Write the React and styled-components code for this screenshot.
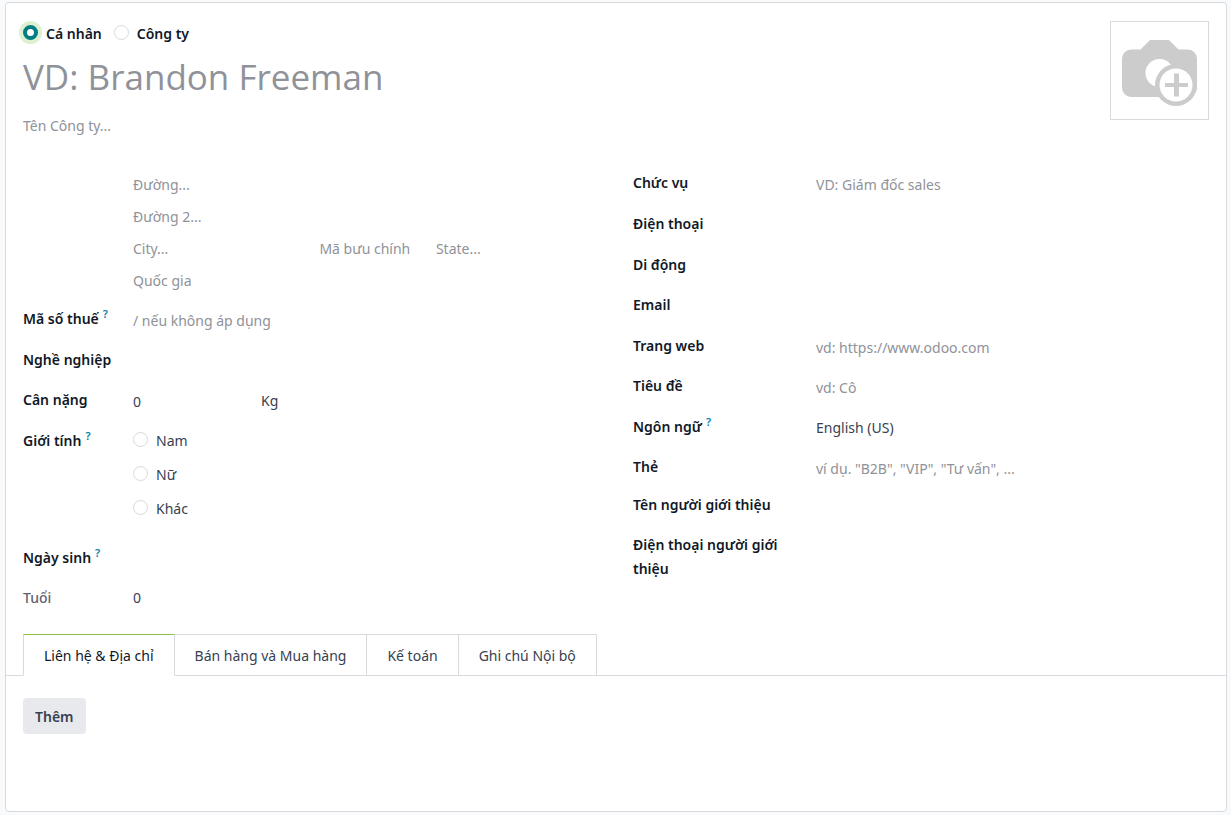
import React, { useState } from 'react';
import styled, { createGlobalStyle } from 'styled-components';

const colors = {
  page: '#f9fafb',
  border: '#d8dadd',
  text: '#374151',
  heading: '#111827',
  muted: '#8f9299',
  readonly: '#5f636f',
  primary: '#017e84',
  ring: '#dff0d0',
  accent: '#8fc446',
};

const GlobalStyle = createGlobalStyle`
  *, *::before, *::after {
    box-sizing: border-box;
  }

  body {
    margin: 0;
    background-color: ${colors.page};
    color: ${colors.text};
    font-family: "Noto Sans", "Open Sans", sans-serif;
    font-size: 14px;
    line-height: 24px;
  }

  input, select, button {
    color: inherit;
    font: inherit;
  }
`;

const Page = styled.main`
  display: flex;
  min-height: 100vh;
  padding: 2px 4px 3px 5px;
`;

const Sheet = styled.form`
  display: flex;
  flex: 1;
  flex-direction: column;
  min-width: 0;
  padding: 18px 17px;
  border: 1px solid ${colors.border};
  border-radius: 4px;
  background-color: #FFFFFF;
`;

const Header = styled.header`
  display: flex;
  align-items: flex-start;
  justify-content: space-between;
  margin-bottom: 33px;
`;

const Identity = styled.div`
  flex: 1;
  min-width: 0;
`;

const TypeSwitch = styled.div`
  display: flex;
  gap: 12px;
  padding-top: 1px;
  color: ${colors.heading};
  font-weight: 600;
`;

const RadioLabel = styled.label`
  display: flex;
  align-items: flex-start;
  gap: 8px;
`;

const Radio = styled.input.attrs({ type: 'radio' })`
  appearance: none;
  flex: none;
  width: 15px;
  height: 15px;
  margin: 3px 0 0;
  border: 1px solid ${colors.border};
  border-radius: 50%;
  background-color: #FFFFFF;

  &:checked {
    border: 4px solid ${colors.primary};
  }

  &:checked${(props) => (props.$ring ? '' : ':focus')} {
    outline: none;
    box-shadow: 0 0 0 4px ${colors.ring};
  }
`;

const Input = styled.input`
  display: block;
  flex: ${(props) => (props.$width ? 'none' : '1')};
  width: ${(props) => props.$width || '100%'};
  min-width: 0;
  height: 26px;
  padding: 0;
  border: 0;
  outline: none;
  background: transparent;

  &::placeholder {
    color: ${colors.muted};
    opacity: 1;
  }
`;

const NameInput = styled(Input)`
  height: 52px;
  margin: 4px 0 10px;
  font-family: "Open Sans", "Noto Sans", sans-serif;
  font-size: 35px;
`;

const Select = styled.select`
  appearance: none;
  flex: 1;
  height: 26px;
  padding: 0;
  border: 0;
  outline: none;
  background: transparent;
`;

const PhotoButton = styled.button`
  flex: none;
  width: 99px;
  height: 99px;
  padding: 0;
  border: 1px solid ${colors.border};
  background-color: #FFFFFF;

  svg {
    display: block;
  }
`;

const Groups = styled.div`
  display: grid;
  grid-template-columns: 1fr 1fr;
  gap: 34px;
`;

const Row = styled.div`
  display: flex;
  align-items: flex-start;
  min-height: ${(props) => props.$height || 41}px;
`;

const Label = styled.label`
  flex: none;
  width: ${(props) => (props.$wide ? 183 : 110)}px;
  padding-right: ${(props) => (props.$wide ? 24 : 0)}px;
  color: ${(props) => (props.$readonly ? colors.readonly : colors.heading)};
  font-weight: ${(props) => (props.$readonly ? 500 : 600)};
`;

const Help = styled.sup`
  margin-left: 4px;
  color: #0180a5;
  font-size: 11px;
  line-height: 0;
`;

const Value = styled.output`
  line-height: 24px;
`;

const Unit = styled.span`
  line-height: 26px;
`;

const Address = styled.div`
  display: grid;
  gap: 6px;
  margin: 0 0 14px 110px;
`;

const AddressLine = styled.div`
  display: flex;
`;

const Options = styled.div`
  display: grid;
  gap: 10px;
`;

const Tabs = styled.div`
  display: flex;
  margin: 7px -17px 0;
  padding-left: 17px;
  box-shadow: inset 0 -1px ${colors.border};
`;

const Tab = styled.button.attrs({ type: 'button', role: 'tab' })`
  height: 42px;
  padding: 1px 20px 0;
  border: 1px solid ${colors.border};
  background-color: #FFFFFF;

  & + & {
    margin-left: -1px;
  }

  &[aria-selected="true"] {
    z-index: 1;
    border-top-color: ${colors.accent};
    border-bottom-color: #FFFFFF;
    color: ${colors.heading};
  }
`;

const Panel = styled.div`
  padding-top: 22px;
`;

const AddButton = styled.button`
  height: 36px;
  padding: 2px 12px 0;
  border: 0;
  border-radius: 4px;
  background-color: #e7e9ed;
  font-weight: 600;
`;

const tabs = [
  'Liên hệ & Địa chỉ',
  'Bán hàng và Mua hàng',
  'Kế toán',
  'Ghi chú Nội bộ',
];

const details = [
  { id: 'function', label: 'Chức vụ', placeholder: 'VD: Giám đốc sales' },
  { id: 'phone', label: 'Điện thoại' },
  { id: 'mobile', label: 'Di động', height: 40 },
  { id: 'email', label: 'Email' },
  { id: 'website', label: 'Trang web', placeholder: 'vd: https://www.odoo.com', height: 40 },
  { id: 'title', label: 'Tiêu đề', placeholder: 'vd: Cô' },
  { id: 'lang', label: 'Ngôn ngữ', options: ['English (US)'], help: true, height: 40 },
  { id: 'tags', label: 'Thẻ', placeholder: 'ví dụ. "B2B", "VIP", "Tư vấn", ...', height: 38 },
  { id: 'referrer', label: 'Tên người giới thiệu', height: 40 },
  { id: 'referrer-phone', label: 'Điện thoại người giới thiệu' },
];

function CameraIcon() {
  return (
    <svg width="97" height="97" viewBox="0 0 97 97" aria-hidden="true">
      <path
        fill="#cccccc"
        d="M39 18h19l9.500 9.500H77a9 9 0 0 1 9 9V66a9 9 0 0 1-9 9H20a9 9 0 0 1-9-9V36.500a9 9 0 0 1 9-9h9.500z"
      />
      <circle cx="48.500" cy="51" r="14" fill="#ffffff" />
      <circle cx="65" cy="63" r="21" fill="#cccccc" />
      <circle cx="65" cy="63" r="16.500" fill="#ffffff" />
      <path fill="#cccccc" d="M63 51.500h5v9.500h9v4h-9v9.500h-5V65h-9v-4h9z" />
    </svg>
  );
}

function FieldLabel({ help, children, ...props }) {
  return (
    <Label {...props}>
      {children}
      {help && <Help>?</Help>}
    </Label>
  );
}

function App() {
  const [type, setType] = useState('person');
  const [activeTab, setActiveTab] = useState(0);

  return (
    <>
      <GlobalStyle />
      <Page>
        <Sheet>
          <Header>
            <Identity>
              <TypeSwitch role="radiogroup" aria-label="Loại liên hệ">
                <RadioLabel>
                  <Radio $ring name="type" checked={type === 'person'} onChange={() => setType('person')} />
                  Cá nhân
                </RadioLabel>
                <RadioLabel>
                  <Radio $ring name="type" checked={type === 'company'} onChange={() => setType('company')} />
                  Công ty
                </RadioLabel>
              </TypeSwitch>
              <NameInput aria-label="Tên" placeholder="VD: Brandon Freeman" />
              <Input aria-label="Tên Công ty" placeholder="Tên Công ty..." />
            </Identity>
            <PhotoButton type="button" aria-label="Tải ảnh lên">
              <CameraIcon />
            </PhotoButton>
          </Header>

          <Groups>
            <div>
              <Address>
                <Input aria-label="Đường" placeholder="Đường..." />
                <Input aria-label="Đường 2" placeholder="Đường 2..." />
                <AddressLine>
                  <Input $width="40%" aria-label="City" placeholder="City..." />
                  <Input $width="25%" aria-label="Mã bưu chính" placeholder="Mã bưu chính" />
                  <Input aria-label="State" placeholder="State..." />
                </AddressLine>
                <Input aria-label="Quốc gia" placeholder="Quốc gia" />
              </Address>
              <Row>
                <FieldLabel htmlFor="vat" help>Mã số thuế</FieldLabel>
                <Input id="vat" placeholder="/ nếu không áp dụng" />
              </Row>
              <Row $height={40}>
                <FieldLabel htmlFor="job">Nghề nghiệp</FieldLabel>
                <Input id="job" />
              </Row>
              <Row>
                <FieldLabel htmlFor="weight">Cân nặng</FieldLabel>
                <Input id="weight" $width="128px" defaultValue="0" />
                <Unit>Kg</Unit>
              </Row>
              <Row $height={117} role="radiogroup" aria-labelledby="gender">
                <FieldLabel as="span" id="gender" help>Giới tính</FieldLabel>
                <Options>
                  {['Nam', 'Nữ', 'Khác'].map((option) => (
                    <RadioLabel key={option}>
                      <Radio name="gender" />
                      {option}
                    </RadioLabel>
                  ))}
                </Options>
              </Row>
              <Row $height={40}>
                <FieldLabel htmlFor="birthday" help>Ngày sinh</FieldLabel>
                <Input id="birthday" />
              </Row>
              <Row>
                <FieldLabel htmlFor="age" $readonly>Tuổi</FieldLabel>
                <Value id="age">0</Value>
              </Row>
            </div>

            <div>
              {details.map((field) => (
                <Row key={field.id} $height={field.height}>
                  <FieldLabel htmlFor={field.id} help={field.help} $wide>{field.label}</FieldLabel>
                  {field.options ? (
                    <Select id={field.id}>
                      {field.options.map((option) => <option key={option}>{option}</option>)}
                    </Select>
                  ) : (
                    <Input id={field.id} placeholder={field.placeholder} />
                  )}
                </Row>
              ))}
            </div>
          </Groups>

          <Tabs role="tablist">
            {tabs.map((tab, index) => (
              <Tab key={tab} aria-selected={index === activeTab} onClick={() => setActiveTab(index)}>
                {tab}
              </Tab>
            ))}
          </Tabs>
          <Panel role="tabpanel" aria-label={tabs[activeTab]}>
            {activeTab === 0 && <AddButton type="button">Thêm</AddButton>}
          </Panel>
        </Sheet>
      </Page>
    </>
  );
}

export default App;
